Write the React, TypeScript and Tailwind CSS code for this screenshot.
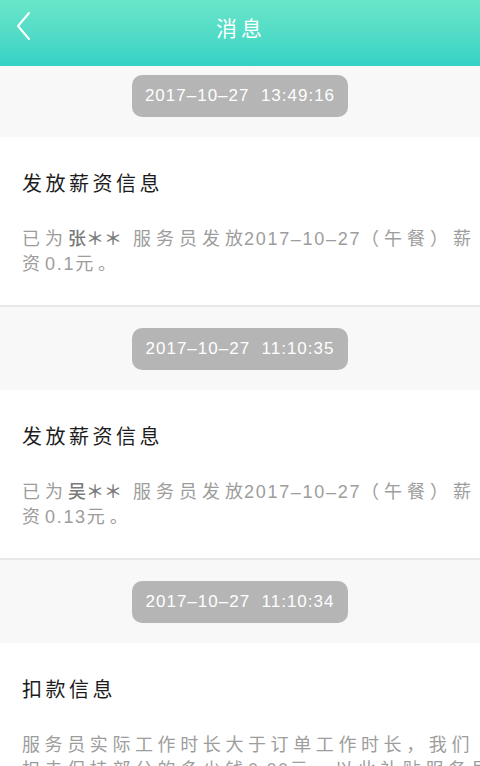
const font = { fontFamily: '"Liberation Sans", "Noto Sans CJK SC", sans-serif' };

type Msg = {
  time: string;
  title: string;
  lines: React.ReactNode[];
  tight?: boolean;
};

// masked name, e.g. 张＊＊
const Name = ({ first }: { first: string }) => (
  <span className="text-[#7a7a7a] font-medium tracking-normal mr-[11px]">
    {first}＊＊
  </span>
);

const Num = ({ children, tight }: { children: React.ReactNode; tight?: boolean }) => (
  <span className={`tracking-[1.7px] ${tight ? "ml-[-4px]" : ""}`}>{children}</span>
);

const messages: Msg[] = [
  {
    time: "2017–10–27  13:49:16",
    title: "发放薪资信息",
    lines: [
      <>
        已为<Name first="张" />服务员发放<Num tight>2017–10–27</Num>（午餐）薪
      </>,
      <>
        资<Num>0.1</Num>元。
      </>,
    ],
  },
  {
    time: "2017–10–27  11:10:35",
    title: "发放薪资信息",
    lines: [
      <>
        已为<Name first="吴" />服务员发放<Num tight>2017–10–27</Num>（午餐）薪
      </>,
      <>
        资<Num>0.13</Num>元。
      </>,
    ],
  },
  {
    time: "2017–10–27  11:10:34",
    title: "扣款信息",
    tight: true,
    lines: [
      <>服务员实际工作时长大于订单工作时长，我们</>,
      <>
        扣去保持部分的多少钱<Num>0.00</Num>元，以此补贴服务员。
      </>,
    ],
  },
];

const TimeTag = ({ time, first }: { time: string; first?: boolean }) => (
  <div className={`flex justify-center pb-[20px] ${first ? "pt-[9px]" : "pt-[21px]"}`}>
    <div className="w-[216px] h-[42px] rounded-[10px] bg-[#b5b5b5] flex items-center justify-center">
      <span className="text-white text-[17px] tracking-[1px] whitespace-pre" style={font}>
        {time}
      </span>
    </div>
  </div>
);

const Card = ({ msg }: { msg: Msg }) => (
  <div className="bg-white border-b-2 border-[#e8e8e8] pl-[22px] pt-[32px] pb-[28px] overflow-hidden" style={font}>
    <div className="text-[20px] leading-[30px] tracking-[3.5px] text-[#1c1c1c] whitespace-nowrap">
      {msg.title}
    </div>
    <div
      className={`mt-[28px] text-[18px] leading-[25px] text-[#9d9d9d] whitespace-nowrap ${
        msg.tight ? "tracking-[4.6px]" : "tracking-[5px]"
      }`}
    >
      {msg.lines.map((line, i) => (
        <div key={i} className="h-[25px]">
          {line}
        </div>
      ))}
    </div>
  </div>
);

export default function App() {
  return (
    <div className="w-[480px] h-[766px] overflow-hidden bg-[#f8f8f8]">
      <header className="h-[66px] bg-gradient-to-b from-[#6ae6c9] to-[#34d2c5] grid grid-cols-[60px_1fr_60px] items-start">
        <button className="flex pl-[16px] pt-[11px]">
          <svg width="16" height="30" viewBox="0 0 16 30" fill="none">
            <polyline
              points="13,2 2,15 13,28"
              stroke="white"
              strokeWidth="2"
              strokeLinecap="round"
              strokeLinejoin="round"
            />
          </svg>
        </button>
        <h1 className="text-center text-white text-[21px] leading-[30px] tracking-[4px] pt-[14px] pl-[2px]" style={font}>
          消息
        </h1>
        <div />
      </header>
      {messages.map((m, i) => (
        <div key={i}>
          <TimeTag time={m.time} first={i === 0} />
          <Card msg={m} />
        </div>
      ))}
    </div>
  );
}
